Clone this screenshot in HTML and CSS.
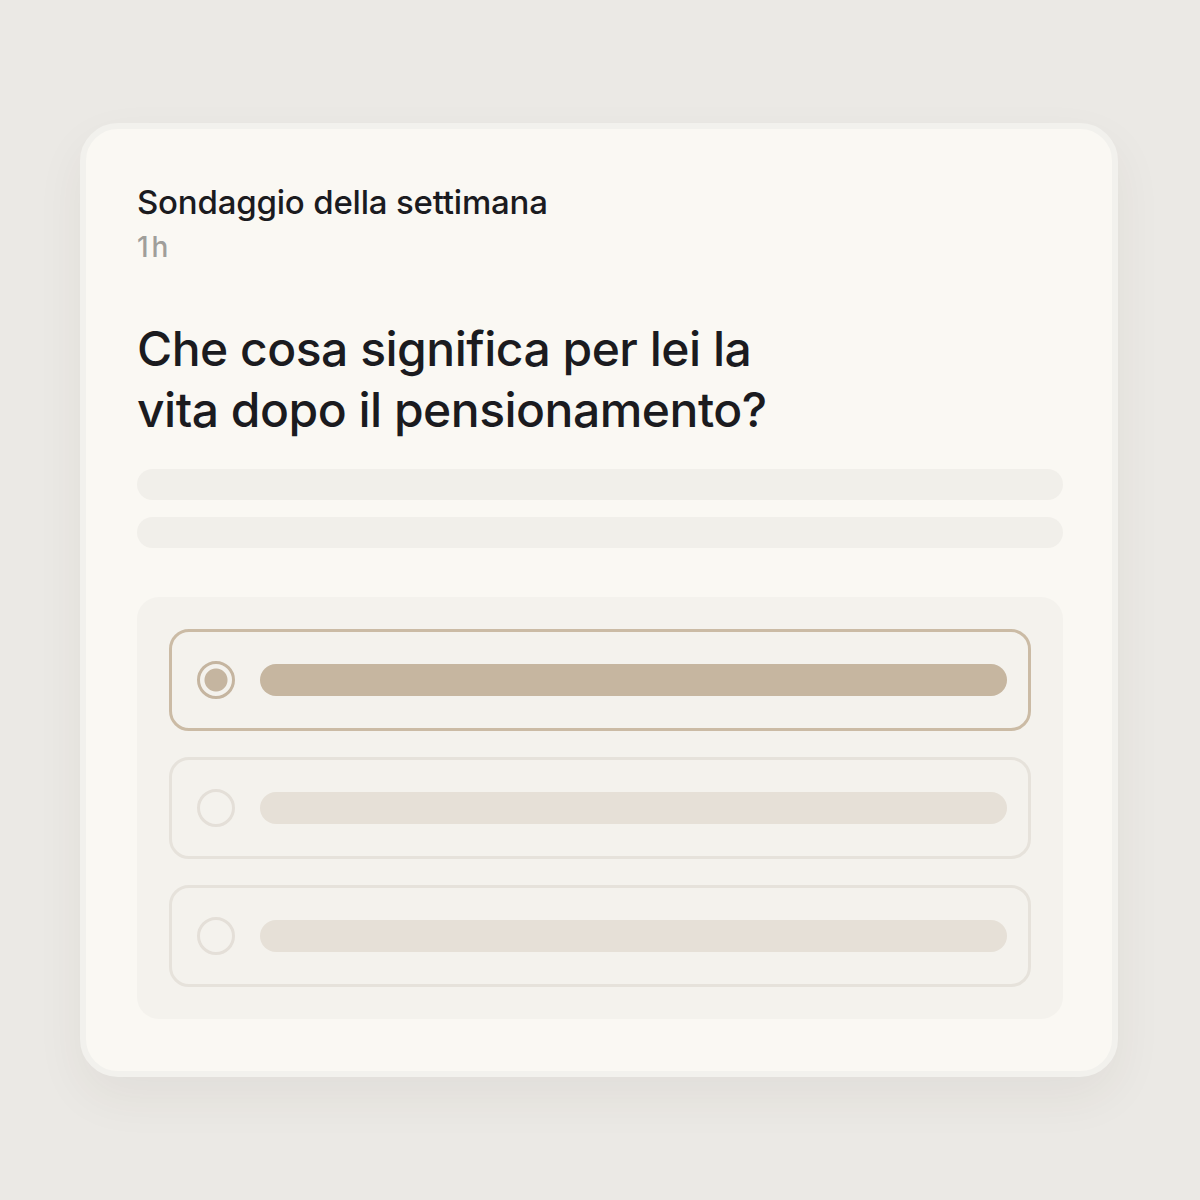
FILE: index.html
```html
<!DOCTYPE html>
<html lang="it">
<head>
  <meta charset="UTF-8" />
  <meta name="viewport" content="width=device-width, initial-scale=1.0"/>
  <title>Sondaggio della settimana</title>
  <link rel="stylesheet" href="styles.css">
</head>
<body>

<div class="card">
  <div class="post-head">
    <div class="post-title">Sondaggio della settimana</div>
    <div class="post-time">1h</div>
  </div>

  <h1 class="question">Che cosa significa per lei la<br>vita dopo il pensionamento?</h1>

  <div class="skeleton">
    <div class="skel-line"></div>
    <div class="skel-line"></div>
  </div>

  <div class="poll">
    <div class="option selected">
      <span class="radio"></span>
      <span class="option-bar"></span>
    </div>
    <div class="option">
      <span class="radio"></span>
      <span class="option-bar"></span>
    </div>
    <div class="option">
      <span class="radio"></span>
      <span class="option-bar"></span>
    </div>
  </div>
</div>

</body>
</html>
```

FILE: styles.css
```css
body {
  margin: 0;
  padding: 123px 0 0 80px;
  background: #ebe9e5;
  font-family: Inter, "Liberation Sans", sans-serif;
  color: #1b1b1f;
  height: 1200px;
  box-sizing: border-box;
}

.card {
  width: 1038px;
  height: 954px;
  box-sizing: border-box;
  background: #faf8f3;
  border: 6px solid #f2f1ed;
  border-radius: 38px;
  box-shadow: 0 20px 50px rgba(60, 50, 30, 0.06);
  padding: 53px 49px 50px 51px;
  display: flex;
  flex-direction: column;
}

.post-head {
  display: flex;
  flex-direction: column;
  gap: 8px;
}
.post-title {
  font-size: 33px;
  line-height: 40px;
  font-weight: 500;
  letter-spacing: -0.2px;
}
.post-time {
  font-size: 28px;
  line-height: 34px;
  color: #a09e9a;
  font-weight: 500;
  letter-spacing: 3px;
}

.question {
  margin: 54px 0 0;
  font-size: 48px;
  line-height: 61px;
  font-weight: 500;
  letter-spacing: -0.5px;
}

.skeleton {
  margin-top: 29px;
  display: flex;
  flex-direction: column;
  gap: 17px;
}
.skel-line {
  height: 31px;
  border-radius: 16px;
  background: #f1efea;
}

.poll {
  margin-top: 49px;
  background: #f4f2ed;
  border-radius: 22px;
  padding: 32px;
  display: flex;
  flex-direction: column;
  gap: 26px;
}

.option {
  height: 102px;
  box-sizing: border-box;
  border: 3px solid #e6e2db;
  border-radius: 20px;
  display: flex;
  align-items: center;
  padding: 0 21px 0 25px;
  gap: 25px;
}
.radio {
  width: 38px;
  height: 38px;
  box-sizing: border-box;
  border-radius: 50%;
  border: 3px solid #e4dfd8;
  flex: none;
}
.option-bar {
  flex: 1;
  height: 32px;
  border-radius: 16px;
  background: #e6e0d7;
}

.option.selected {
  border-color: #cbbba5;
}
.option.selected .radio {
  border-color: #c5b5a0;
  background: radial-gradient(circle, #c5b5a0 0 11px, transparent 12px);
}
.option.selected .option-bar {
  background: #c6b6a0;
}
```
